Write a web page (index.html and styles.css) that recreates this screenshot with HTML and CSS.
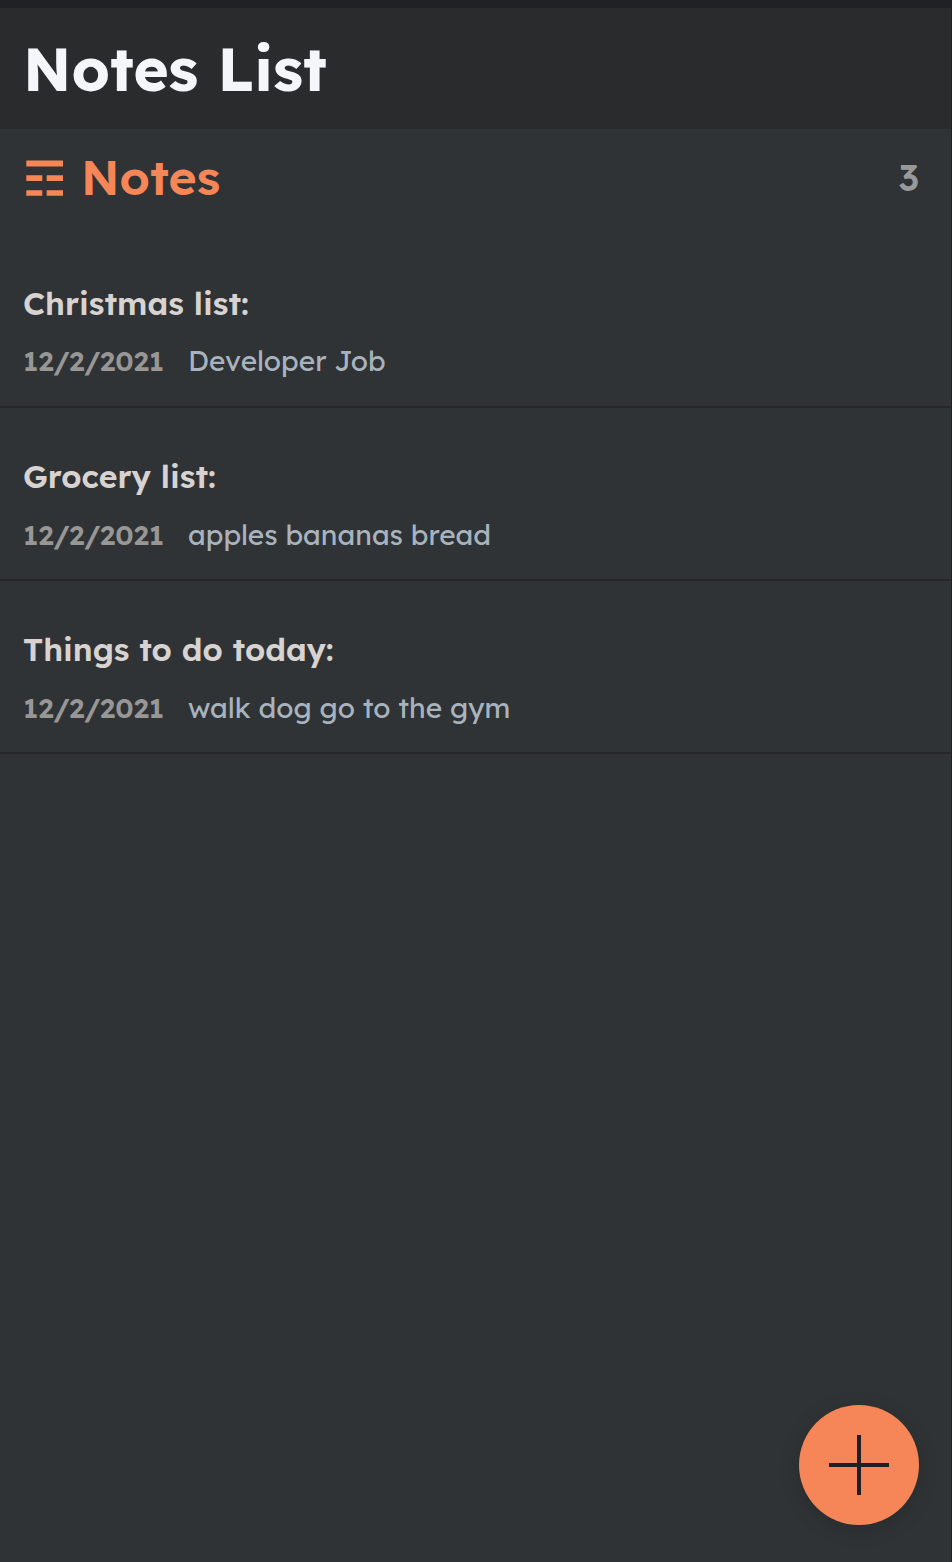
FILE: index.html
```html
<!DOCTYPE html>
<html lang="en">
<head>
<meta charset="utf-8">
<title>Notes List</title>
<link rel="stylesheet" href="styles.css">
</head>
<body>
<div class="app">
  <header class="header"><h1 class="title">Notes List</h1></header>
  <main class="panel">
    <div class="bar">
      <svg class="icon" width="39" height="37" viewBox="0 0 39 37" fill="currentColor"><path d="M1.3.5h36.7v6H1.3zM1.3 15.3h16v5.6h-16zM21.7 15.3H38v5.6H21.7zM1.3 30.3h16v5.5h-16zM21.7 30.3H38v5.5H21.7z"/></svg>
      <h2 class="subtitle">Notes</h2>
      <span class="count">3</span>
    </div>
    <div class="list">
      <article class="note">
        <h3 class="name">Christmas list:</h3>
        <p class="line"><span class="date">12/2/2021</span><span class="text">Developer Job</span></p>
      </article>
      <article class="note">
        <h3 class="name">Grocery list:</h3>
        <p class="line"><span class="date">12/2/2021</span><span class="text">apples bananas bread</span></p>
      </article>
      <article class="note">
        <h3 class="name">Things to do today:</h3>
        <p class="line"><span class="date">12/2/2021</span><span class="text">walk dog go to the gym</span></p>
      </article>
    </div>
  </main>
  <button class="add" aria-label="Add note"><svg width="60" height="60" viewBox="0 0 60 60" fill="none" stroke="#1f2023" stroke-width="4"><path d="M30 0v60M0 30h60"/></svg></button>
</div>
</body>
</html>
```
FILE: styles.css
```css
* { box-sizing: border-box; margin: 0; padding: 0; }
body { background: #202124; font-family: Lexend, Inter, sans-serif; }
.app { height: 1562px; padding: 8px 1px 0 0; display: flex; flex-direction: column; }
.header { height: 121px; padding: 18px 23px; background: #2a2b2c; }
.title { font-size: 60px; line-height: 85px; font-weight: 700; color: #f5f6f9; white-space: nowrap; }
.panel { flex: 1; background: #2f3335; }
.bar { height: 98px; padding: 0 32px 0 25px; display: flex; align-items: center; color: #f68657; }
.icon { flex: none; margin-right: 17px; }
.subtitle { padding-bottom: 2px; font-size: 48px; line-height: 60px; font-weight: 600; }
.count { margin-left: auto; padding-bottom: 1px; font-size: 36px; font-weight: 600; color: #999; }
.list { padding-top: 7px; }
.note { height: 173px; padding: 47px 23px 0; border-bottom: 2px solid #26272a; }
.note:first-child { height: 174px; padding-top: 48px; }
.name { font-size: 32px; line-height: 42px; font-weight: 600; color: #d8d3d1; white-space: nowrap; }
.line { display: flex; margin-top: 18px; font-size: 28px; line-height: 40px; white-space: nowrap; }
.note:first-child .line { margin-top: 17px; }
.date { width: 165px; font-weight: 600; color: #999795; }
.text { color: #a9b3be; }
.add { position: fixed; right: 33px; bottom: 37px; width: 120px; height: 120px; display: grid; place-items: center; border: 0; border-radius: 50%; background: #f68657; box-shadow: 0 4px 20px rgba(0, 0, 0, .15); }
```
